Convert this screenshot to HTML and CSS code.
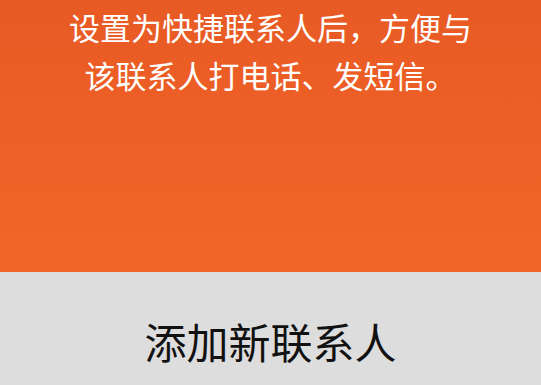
FILE: index.html
```html
<!DOCTYPE html>
<html lang="zh-CN">
<head>
    <meta charset="UTF-8">
    <meta name="viewport" content="width=device-width, initial-scale=1.0">
    <title>快捷联系人</title>
    <link rel="stylesheet" href="styles.css">
</head>
<body>
    <div class="hint-panel">
        <p class="hint-text">设置为快捷联系人后，方便与<br>该联系人打电话、发短信。</p>
    </div>
    <div class="add-bar">
        <span class="add-label">添加新联系人</span>
    </div>
</body>
</html>
```

FILE: styles.css
```css
html, body {
    margin: 0;
    padding: 0;
    height: 100%;
    overflow: hidden;
}
body {
    font-family: "Noto Sans CJK SC", "Noto Sans", sans-serif;
    background-color: #dddddd;
}
.hint-panel {
    height: 272px;
    background: linear-gradient(to bottom, #e85a24, #f36628);
    padding-top: 3px;
    box-sizing: border-box;
}
.hint-text {
    margin: 0;
    color: #fff;
    font-size: 31px;
    line-height: 48px;
    text-align: center;
}
.add-bar {
    height: 113px;
    display: flex;
    justify-content: center;
    padding-top: 43px;
    box-sizing: border-box;
}
.add-label {
    color: #111;
    font-size: 42px;
    line-height: 52px;
}
```
